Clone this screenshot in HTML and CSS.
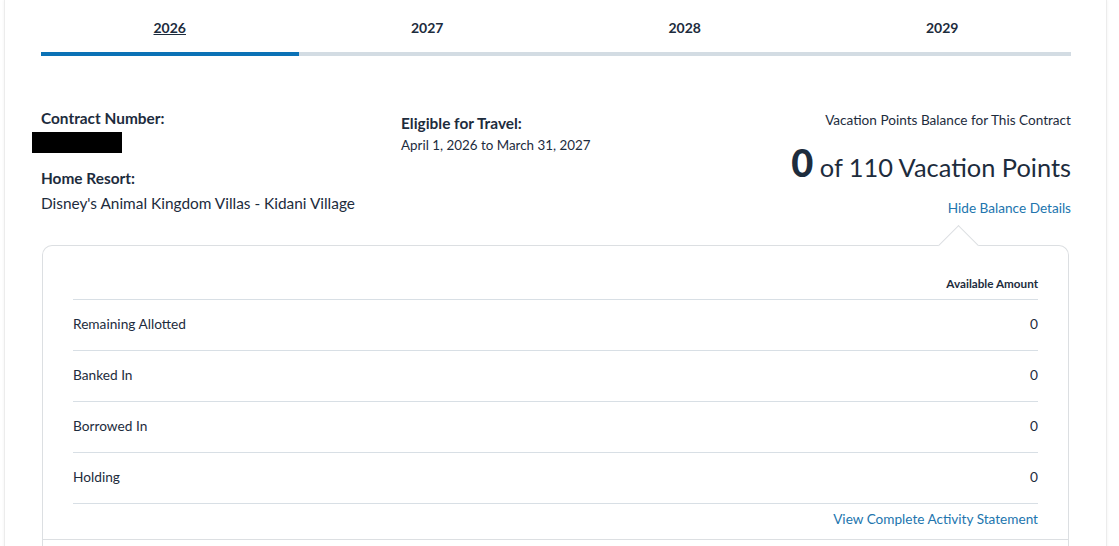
FILE: index.html
```html
<!DOCTYPE html>
<html lang="en">
<head>
  <meta charset="UTF-8" />
  <meta name="viewport" content="width=device-width, initial-scale=1.0" />
  <title>Vacation Points</title>
  <link rel="stylesheet" href="styles.css">
</head>
<body>
  <div class="page">
    <nav class="tabs">
      <a class="tab active" href="#">2026</a>
      <a class="tab" href="#">2027</a>
      <a class="tab" href="#">2028</a>
      <a class="tab" href="#">2029</a>
    </nav>

    <div class="info">
      <div class="col">
        <div class="label">Contract Number:</div>
        <div class="redacted"></div>
        <div class="label resort-label">Home Resort:</div>
        <div class="value">Disney's Animal Kingdom Villas - Kidani Village</div>
      </div>
      <div class="col travel">
        <div class="label">Eligible for Travel:</div>
        <div class="dates">April 1, 2026 to March 31, 2027</div>
      </div>
      <div class="col balance">
        <div class="balance-title">Vacation Points Balance for This Contract</div>
        <div class="points"><strong>0</strong> of 110 Vacation Points</div>
        <a class="toggle" href="#">Hide Balance Details</a>
      </div>
    </div>

    <div class="card">
      <table class="details">
        <thead>
          <tr><th></th><th class="num">Available Amount</th></tr>
        </thead>
        <tbody>
          <tr><td>Remaining Allotted</td><td class="num">0</td></tr>
          <tr><td>Banked In</td><td class="num">0</td></tr>
          <tr><td>Borrowed In</td><td class="num">0</td></tr>
          <tr><td>Holding</td><td class="num">0</td></tr>
        </tbody>
      </table>
      <div class="statement"><a href="#">View Complete Activity Statement</a></div>
      <div class="card-footer"></div>
    </div>
  </div>
</body>
</html>
```

FILE: styles.css
```css
body { margin: 0; background: #fff; font-family: Lato, "Open Sans", sans-serif; color: #1d2c3d; }
a { color: #2275ae; text-decoration: none; }

.page { margin-left: 4px; width: 1030px; min-height: 546px; padding: 0 35px 0 36px; border-left: 1px solid #ececec; border-right: 1px solid #ececec; box-shadow: 0 0 3px rgba(0,0,0,0.06); }

/* year tabs */
.tabs { display: grid; grid-template-columns: repeat(4, 1fr); }
.tab { display: block; text-align: center; padding: 18px 0 14px; line-height: 20px; font-size: 14px; font-weight: 700; color: #1d2c3d; border-bottom: 4px solid #d3dce3; }
.tab.active { border-bottom-color: #0b72b6; text-decoration: underline; }

/* contract summary */
.info { display: grid; grid-template-columns: 360px 1fr auto; margin-top: 52px; align-items: start; }
.label { font-size: 15.4px; font-weight: 700; line-height: 20px; }
.redacted { width: 90px; height: 21px; background: #000; margin: 4px 0 0 -9px; }
.resort-label { margin-top: 15px; }
.value { font-size: 15.4px; line-height: 20px; margin-top: 5px; }
.travel { padding-top: 5px; }
.dates { font-size: 13.4px; line-height: 18px; margin-top: 3px; }
.balance { text-align: right; padding-top: 3px; }
.balance-title { font-size: 13.6px; line-height: 18px; }
.points { font-size: 25.4px; line-height: 44px; margin-top: 11px; }
.points strong { font-size: 38px; font-weight: 900; }
.toggle { display: block; font-size: 13.6px; line-height: 18px; margin-top: 10px; }

/* balance details */
.card { position: relative; margin: 28px 2px 0 1px; border: 1px solid #dcdfe2; border-bottom: 0; border-radius: 10px 10px 0 0; padding-top: 30px; }
.card::before { content: ""; position: absolute; top: -15px; right: 95px; width: 28px; height: 28px; background: #fff; border-top: 1px solid #dcdfe2; border-left: 1px solid #dcdfe2; transform: rotate(45deg); }
.details { width: calc(100% - 60px); margin: 0 30px; border-collapse: collapse; font-size: 13.7px; }
.details th { font-size: 11.7px; font-weight: 700; text-align: left; height: 23px; padding: 0; vertical-align: top; }
.details td { box-sizing: border-box; height: 51px; padding: 0 0 3px; border-top: 1px solid #d8dfe5; vertical-align: middle; }
.details tbody tr:last-child td { border-bottom: 1px solid #d8dfe5; }
.details .num { text-align: right; }
.statement { text-align: right; padding: 6px 30px 0; line-height: 18px; height: 29px; font-size: 13.6px; }
.card-footer { border-top: 1px solid #dcdfe2; height: 20px; }
```
